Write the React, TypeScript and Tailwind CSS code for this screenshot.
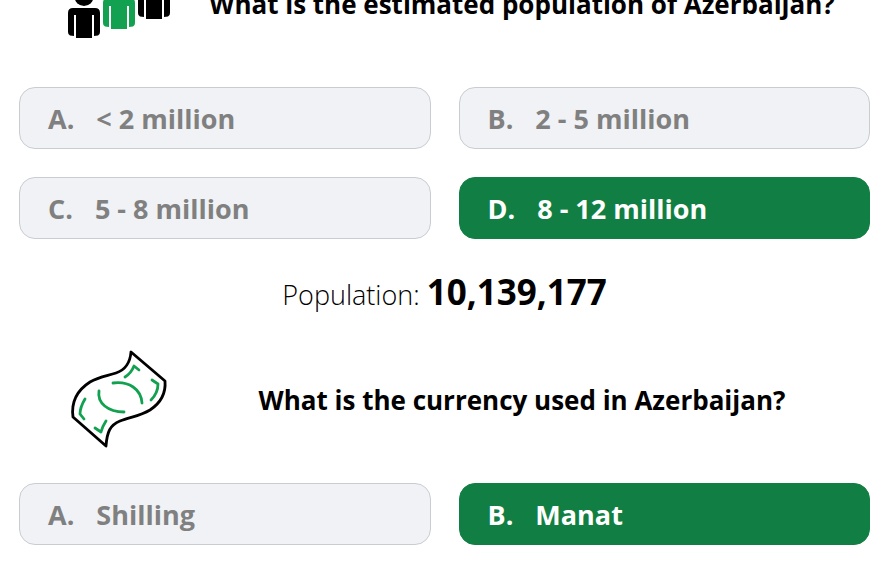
import React from "react";
import clsx from "clsx";

type Option = {
  letter: string;
  text: string;
  correct?: boolean;
};

const populationOptions: Option[] = [
  { letter: "A.", text: "< 2 million" },
  { letter: "B.", text: "2 - 5 million" },
  { letter: "C.", text: "5 - 8 million" },
  { letter: "D.", text: "8 - 12 million", correct: true },
];

const currencyOptions: Option[] = [
  { letter: "A.", text: "Shilling" },
  { letter: "B.", text: "Manat", correct: true },
];

// Three standing figures, the middle one in green
const PeopleIcon = () => (
  <svg viewBox="0 0 102 68" className="w-full" aria-hidden="true">
    <g>
      <circle cx="16" cy="26.500" r="9.500" />
      <path d="M5 38h22q5 0 5 5v19q0 3-2 3.500l-4 .5V45h-2v23H8V45H6v21l-4-.5q-2-.5-2-3.500V43q0-5 5-5z" />
    </g>
    <g fill="#12a150">
      <circle cx="51" cy="16.500" r="9.500" />
      <path d="M40 28h22q5 0 5 5v20q0 3-2 3.500l-4 .5V36h-2v23H43V36h-2v21l-4-.5q-2-.5-2-3.500V33q0-5 5-5z" />
    </g>
    <g>
      <circle cx="86" cy="6.500" r="9.500" />
      <path d="M75 18h22q5 0 5 5v20q0 3-2 3.500l-4 .5V25h-2v24H78V25h-2v22l-4-.5q-2-.5-2-3.500V23q0-5 5-5z" />
    </g>
  </svg>
);

// Waving banknote
const BanknoteIcon = () => (
  <svg viewBox="0 0 102 102" className="w-full" fill="none" strokeLinecap="round" strokeLinejoin="round" aria-hidden="true">
    <path
      d="M63 3C62 15 57 21 48 24C39 27 31 28 22 33C8 42 3 53 5 68L38 97C39 83 42 76 52 72C62 68 72 67 82 61C94 53 98 44 97 32Z"
      stroke="#000"
      strokeWidth="2.800"
    />
    <g stroke="#12a150" strokeWidth="2.800">
      <path d="M57 28C62 25 64 22 66 17L71 21" />
      <path d="M84 31L90 35C90 41 88 46 83 51" />
      <path d="M45 34C61 32 73 40 74 54" />
      <path d="M31 42C29 54 40 63 56 63" />
      <path d="M17 50C14 55 12 60 12 65L16 70" />
      <path d="M27 79L33 83C34 79 36 75 38 72" />
    </g>
  </svg>
);

const QuestionHeader = ({ icon, children }: { icon: React.ReactNode; children: React.ReactNode }) => (
  <div className="mb-7 flex h-[110px] items-center gap-1 pl-[49px]">
    <div className="w-[102px] shrink-0">{icon}</div>
    <h2 className="flex-1 text-center text-[26px] leading-9 font-bold whitespace-nowrap">{children}</h2>
  </div>
);

const OptionGrid = ({ options }: { options: Option[] }) => (
  <div className="grid grid-cols-2 gap-7">
    {options.map(({ letter, text, correct }) => (
      <button
        key={letter}
        type="button"
        className={clsx(
          "flex h-[62px] items-center gap-[22px] rounded-2xl border px-7 pt-0.5 text-left text-[27px] leading-9 font-bold",
          correct ? "border-[#117f43] bg-[#117f43] text-white" : "border-[#c8cdd2] bg-[#f0f2f5] text-[#808080]",
        )}
      >
        <span>{letter}</span>
        <span>{text}</span>
      </button>
    ))}
  </div>
);

export default function App() {
  return (
    <div className="h-screen overflow-hidden bg-white font-['Open_Sans','Noto_Sans',sans-serif] text-black">
      <main className="-mt-[51px] pr-[13px] pl-[19px]">
        <section>
          <QuestionHeader icon={<PeopleIcon />}>What is the estimated population of Azerbaijan?</QuestionHeader>
          <OptionGrid options={populationOptions} />
          <p className="flex h-[106px] items-center justify-center pt-0.5">
            <span className="text-[27px] leading-[44px] font-light">
              Population: <strong className="text-[35px] font-bold">10,139,177</strong>
            </span>
          </p>
        </section>
        <section>
          <QuestionHeader icon={<BanknoteIcon />}>What is the currency used in Azerbaijan?</QuestionHeader>
          <OptionGrid options={currencyOptions} />
        </section>
      </main>
    </div>
  );
}
